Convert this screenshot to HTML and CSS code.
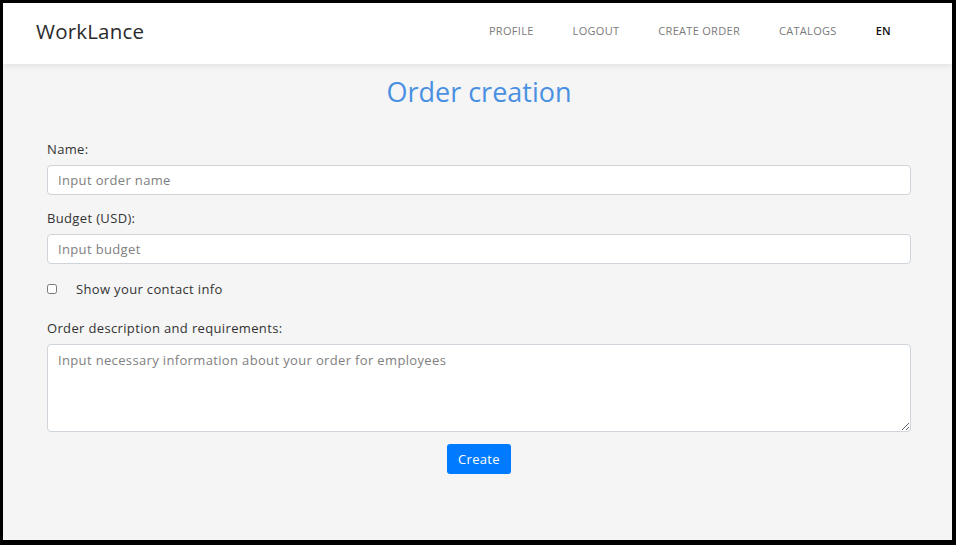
FILE: index.html
```html
<!DOCTYPE html>
<html>
<head>
<meta charset="utf-8">
<link rel="stylesheet" href="styles.css">
</head>
<body>
<div class="frame">
  <header class="topbar">
    <div class="logo">WorkLance</div>
    <nav class="nav">
      <a class="nav-link">PROFILE</a>
      <a class="nav-link">LOGOUT</a>
      <a class="nav-link">CREATE ORDER</a>
      <a class="nav-link">CATALOGS</a>
      <a class="nav-link lang">EN</a>
    </nav>
  </header>
  <main class="content">
    <h1 class="title">Order creation</h1>
    <form class="form">
      <label class="label">Name:</label>
      <input class="field" type="text" placeholder="Input order name">
      <label class="label">Budget (USD):</label>
      <input class="field" type="text" placeholder="Input budget">
      <div class="check-row">
        <input type="checkbox" class="check">
        <span class="check-label">Show your contact info</span>
      </div>
      <label class="label">Order description and requirements:</label>
      <textarea class="area" placeholder="Input necessary information about your order for employees"></textarea>
      <div class="actions">
        <button type="button" class="btn">Create</button>
      </div>
    </form>
  </main>
</div>
</body>
</html>
```
FILE: styles.css
```css
* { box-sizing: border-box; }
html, body { margin: 0; padding: 0; background: #000; }
body {
  font-family: "Open Sans", "Noto Sans", sans-serif;
  color: #333;
  width: 956px;
  height: 545px;
  padding: 3px 4px 5px 3px;
}
.frame {
  width: 949px;
  height: 537px;
  background: #f5f5f5;
  overflow: hidden;
}
.topbar {
  height: 61px;
  background: #fff;
  box-shadow: 0 2px 6px rgba(0,0,0,0.08);
  display: flex;
  align-items: center;
  justify-content: space-between;
  padding: 0 61px 6px 33px;
  position: relative;
}
.logo {
  font-size: 20.5px;
  font-weight: 400;
  color: #2a2a2a;
  letter-spacing: 0.2px;
}
.nav {
  display: flex;
  gap: 39px;
  font-size: 11px;
  letter-spacing: 0.3px;
}
.nav-link {
  color: #7a7a7a;
  text-decoration: none;
}
.nav-link.lang {
  color: #111;
  font-weight: 600;
}
.content {
  padding: 0 41px 0 44px;
}
.title {
  margin: 11px 0 0;
  text-align: center;
  font-size: 27px;
  font-weight: 400;
  color: #4a90e2;
  line-height: 34px;
}
.form {
  display: flex;
  flex-direction: column;
  margin-top: 31px;
}
.label {
  font-size: 13px;
  letter-spacing: 0.35px;
  line-height: 18px;
  color: #333;
  margin-bottom: 7px;
}
.field {
  height: 30px;
  border: 1px solid #ced4da;
  border-radius: 4px;
  background: #fff;
  padding: 0 10px;
  font-family: inherit;
  font-size: 13px;
  letter-spacing: 0.35px;
  margin-bottom: 14px;
}
.field::placeholder, .area::placeholder { color: #808080; }
.check-row {
  display: flex;
  align-items: center;
  margin: 4px 0 23px;
  height: 14px;
}
.check {
  margin: 0 19px 0 0;
  width: 10px;
  height: 10px;
}
.check-label { font-size: 13px; letter-spacing: 0.35px; color: #333; }
.area {
  height: 88px;
  border: 1px solid #ced4da;
  border-radius: 4px;
  background: #fff;
  padding: 6px 10px;
  font-family: inherit;
  font-size: 13px;
  letter-spacing: 0.35px;
  resize: vertical;
}
.actions {
  display: flex;
  justify-content: center;
  margin-top: 12px;
}
.btn {
  width: 64px;
  height: 30px;
  background: #007bff;
  color: #fff;
  border: none;
  border-radius: 3px;
  font-family: inherit;
  font-size: 13px;
  letter-spacing: 0.3px;
}
```
